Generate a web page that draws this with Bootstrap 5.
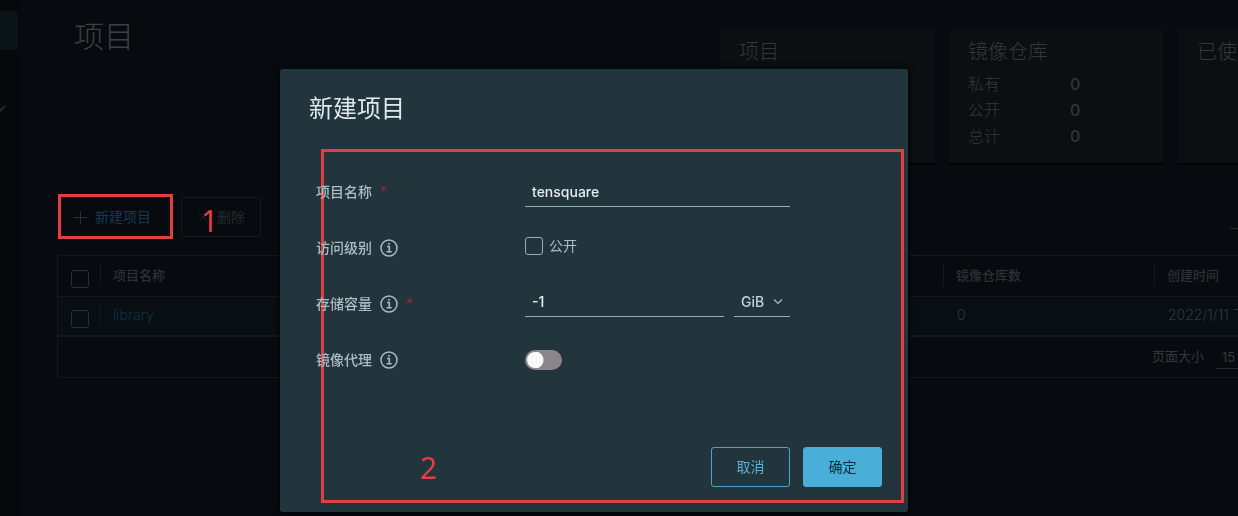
<!DOCTYPE html>
<html lang="zh-CN">
<head>
<meta charset="utf-8">
<meta name="viewport" content="width=device-width, initial-scale=1">
<title>项目</title>
<link rel="stylesheet" href="https://cdn.jsdelivr.net/npm/bootstrap@5.3.0/dist/css/bootstrap.min.css">
<style>
:root { --page:#070b10; --panel:#0b0f12; --line:#14191c; --dim:#33383b; --dimlink:#123446; --modal:#22343c; --soft:#adbbc4; --mark:#e23f42; }
html, body { min-height:100%; }
body { background:var(--page); color:var(--dim); font:14px/20px Inter,"Noto Sans CJK SC",sans-serif; overflow:hidden; }
a { color:var(--dimlink); text-decoration:none; }
.side-rail { width:20px; flex:none; background:#05090c; padding-top:11px; }
.side-item { height:39px; width:18px; background:#0a1318; border-radius:0 4px 4px 0; }
.side-caret { display:block; margin-top:54px; }
.content-area { min-width:0; padding-left:37px; }
.page-title { font-size:30px; line-height:40px; font-weight:300; padding:16px 0 0 17px; color:#3c4043; }
.summary-strip { width:518px; gap:14px; padding:29px 0 4px; overflow:hidden; }
.summary-card { flex:none; width:215px; height:134px; background:var(--panel); padding:10px 19px; box-shadow:0 2px 1px #020406; }
.summary-card h2 { font-size:20px; line-height:26px; font-weight:300; margin:0 0 6px; }
.summary-card dl { font-size:16px; line-height:26px; font-weight:300; margin:0; }
.summary-card dt { width:102px; font-weight:300; }
.summary-card dd { margin:0; font-weight:500; }
.tool-row { margin-top:27px; gap:8px; padding-left:1px; }
.tool-row .btn { font-size:14px; line-height:20px; height:40px; width:80px; border:1px solid var(--line); border-radius:3px; color:#24292c; padding:0 14px; white-space:nowrap; }
.tool-row .btn-new { color:#143a50; width:108px; padding:0 12px; border-color:#0e161b; }
.callout-one { border:3px solid var(--mark); width:115px; height:45px; overflow:hidden; }
.step-mark { position:absolute; color:var(--mark); font:30px/32px "Noto Sans",sans-serif; }
.step-one { left:20px; top:8px; }
.search-slot { width:8px; height:24px; border-bottom:1px solid #25271f; }
.grid-box { margin-top:16px; overflow:hidden; border:1px solid var(--line); border-right:0; border-radius:3px 0 0 3px; }
.grid-table { width:1300px; table-layout:fixed; margin:0; border-collapse:collapse; }
.grid-table th, .grid-table td { height:40px; padding:0 0 2px 14px; vertical-align:middle; border-bottom:1px solid var(--line); white-space:nowrap; }
.grid-table th { font-size:13px; font-weight:500; color:#2c3134; }
.grid-table tbody td { background:#090e12; font-weight:300; border-bottom-width:2px; }
.cell-rule { display:flex; align-items:center; height:22px; border-left:1px solid var(--line); padding-left:12px; }
.grid-table .ruled { padding-left:0; }
.grid-table .pick { padding:6px 0 0 13px; }
.tick { appearance:none; display:block; width:18px; height:18px; margin:0; border:1px solid #2a2f32; border-radius:3px; background:transparent; }
.grid-foot { height:40px; gap:12px; padding-bottom:2px; font-size:13px; }
.page-size { width:22px; line-height:22px; padding-left:6px; border-bottom:1px solid #25292c; margin-top:3px; }

.modal { padding-right:50px; }
.modal-dialog { max-width:628px; margin:69px auto 0; }
.modal-content { background:var(--modal); border:0; border-radius:3px; color:var(--soft); box-shadow:0 1px 6px #000; padding:0 4px 9px 29px; }
.modal-title { font-size:24px; line-height:32px; font-weight:400; color:#dfe8ed; padding:24px 0 23px; }
.form-frame { border:3px solid var(--mark); margin:1px 0 0 12px; height:354px; position:relative; }
.form-frame form { margin-left:-8px; height:100%; }
.field-row { height:56px; }
.field-row.first-row { margin-top:12px; }
.field-name { width:209px; font-weight:500; display:flex; align-items:center; gap:8px; }
.need { color:#82302c; }
.form-frame .form-control, .form-frame .form-select { background-color:transparent; color:#e6edf1; border:0; border-bottom:1px solid #9badb5; border-radius:0; font-size:14px; line-height:20px; height:30px; padding:0 7px; font-weight:500; }
.form-frame .form-select { background-image:none; color:#c5d2d9; appearance:none; }
.name-box { width:265px; } .quota-box { width:199px; }
.unit-wrap { width:56px; margin-left:10px; position:relative; }
.unit-wrap svg { position:absolute; right:7px; top:11px; pointer-events:none; }
.form-frame .tick { border-color:#9badb5; }
.pub-label { padding-left:6px; }
.form-frame .form-switch { min-height:0; padding:0; margin:0; }
.form-frame .form-switch .form-check-input { display:block; float:none; margin:0; width:37px; height:20px; border:2px solid #8a868a; background:radial-gradient(circle at 8px 8px,#fafafa 8px,#8a868a 9px); border-radius:10px; }
.action-row { gap:13px; padding-right:19px; margin-top:59px; }
.action-row .btn { width:79px; height:40px; font-size:14px; line-height:20px; border-radius:3px; border:1px solid #49a5cd; color:#5aafd4; padding:0; }
.action-row .btn-ok { background:#49afd9; border-color:#49afd9; color:#0d2b3a; }
</style>
</head>
<body>
<div class="d-flex vh-100">
  <aside class="side-rail">
    <div class="side-item"></div>
    <svg class="side-caret" width="8" height="10" viewBox="0 0 8 10" fill="none" stroke="#303538" stroke-width="1.3"><path d="M-3 3.5 0 7 5 2"/></svg>
  </aside>
  <main class="content-area flex-grow-1">
    <div class="d-flex justify-content-between">
      <h1 class="page-title m-0">项目</h1>
      <div class="summary-strip d-flex">
        <section class="summary-card"><h2>项目</h2></section>
        <section class="summary-card">
          <h2>镜像仓库</h2>
          <dl>
            <div class="d-flex"><dt>私有</dt><dd>0</dd></div>
            <div class="d-flex"><dt>公开</dt><dd>0</dd></div>
            <div class="d-flex"><dt>总计</dt><dd>0</dd></div>
          </dl>
        </section>
        <section class="summary-card"><h2>已使用</h2></section>
      </div>
    </div>
    <div class="tool-row d-flex align-items-center">
      <div class="callout-one">
        <button type="button" class="btn btn-new d-flex align-items-center gap-2"><svg width="13" height="13" viewBox="0 0 13 13" stroke="#22323a"><path d="M6.5 0v13M0 6.5h13"/></svg>新建项目</button>
      </div>
      <div class="position-relative">
        <button type="button" class="btn d-flex align-items-center gap-2"><svg width="13" height="13" viewBox="0 0 13 13" stroke="#1c2125"><path d="M3 3l8 8M11 3l-8 8"/></svg>删除</button>
        <span class="step-mark step-one">1</span>
      </div>
      <div class="search-slot ms-auto"></div>
    </div>
    <div class="grid-box">
      <table class="grid-table">
        <colgroup><col style="width:42px"><col style="width:843px"><col style="width:211px"><col></colgroup>
        <thead><tr>
          <th class="pick"><input type="checkbox" class="tick" aria-label="全选"></th>
          <th class="ruled"><div class="cell-rule">项目名称</div></th>
          <th class="ruled"><div class="cell-rule">镜像仓库数</div></th>
          <th class="ruled"><div class="cell-rule">创建时间</div></th>
        </tr></thead>
        <tbody><tr>
          <td class="pick"><input type="checkbox" class="tick" aria-label="library"></td>
          <td class="ruled"><div class="cell-rule"><a href="#">library</a></div></td>
          <td>0</td>
          <td>2022/1/11 下午</td>
        </tr></tbody>
      </table>
      <div class="grid-foot d-flex align-items-center justify-content-end"><span>页面大小</span><span class="page-size">15</span></div>
    </div>
  </main>
</div>

<div class="modal d-block" tabindex="-1" role="dialog" aria-labelledby="dlgTitle">
  <div class="modal-dialog">
    <div class="modal-content">
      <h3 class="modal-title" id="dlgTitle">新建项目</h3>
      <div class="form-frame">
        <form class="d-flex flex-column">
          <div class="field-row first-row d-flex align-items-center">
            <label class="field-name" for="pname">项目名称<span class="need">*</span></label>
            <input class="form-control name-box" id="pname" type="text" value="tensquare">
          </div>
          <div class="field-row d-flex align-items-center">
            <span class="field-name">访问级别<svg width="18" height="18" viewBox="0 0 18 18" fill="none" stroke="#adbbc4" stroke-width="1.5"><circle cx="9" cy="9" r="8"/><path d="M7 7.5h2.3v5M6.5 12.8h5.2"/><circle cx="9" cy="4.8" r=".7" fill="#adbbc4" stroke-width=".7"/></svg></span>
            <div class="d-flex align-items-center pb-1"><input type="checkbox" class="tick" id="pub"><label for="pub" class="pub-label">公开</label></div>
          </div>
          <div class="field-row d-flex align-items-center">
            <label class="field-name" for="quota">存储容量<svg width="18" height="18" viewBox="0 0 18 18" fill="none" stroke="#adbbc4" stroke-width="1.5"><circle cx="9" cy="9" r="8"/><path d="M7 7.5h2.3v5M6.5 12.8h5.2"/><circle cx="9" cy="4.8" r=".7" fill="#adbbc4" stroke-width=".7"/></svg><span class="need">*</span></label>
            <div class="d-flex pb-1">
              <input class="form-control quota-box" id="quota" type="text" value="-1">
              <div class="unit-wrap"><select class="form-select" aria-label="单位"><option>GiB</option></select><svg width="10" height="8" viewBox="0 0 10 8" fill="none" stroke="#adbbc4" stroke-width="1.2"><path d="M1 1.5 5 5.5 9 1.5"/></svg></div>
            </div>
          </div>
          <div class="field-row d-flex align-items-center">
            <label class="field-name" for="proxy">镜像代理<svg width="18" height="18" viewBox="0 0 18 18" fill="none" stroke="#adbbc4" stroke-width="1.5"><circle cx="9" cy="9" r="8"/><path d="M7 7.5h2.3v5M6.5 12.8h5.2"/><circle cx="9" cy="4.8" r=".7" fill="#adbbc4" stroke-width=".7"/></svg></label>
            <div class="form-check form-switch"><input class="form-check-input" type="checkbox" role="switch" id="proxy"></div>
          </div>
          <div class="action-row d-flex justify-content-end">
            <button type="button" class="btn">取消</button>
            <button type="button" class="btn btn-ok">确定</button>
          </div>
        </form>
        <span class="step-mark bottom-0 start-0 ms-5 mb-3 ps-5">2</span>
      </div>
    </div>
  </div>
</div>
<script src="https://cdn.jsdelivr.net/npm/bootstrap@5.3.0/dist/js/bootstrap.bundle.min.js"></script>
</body>
</html>
